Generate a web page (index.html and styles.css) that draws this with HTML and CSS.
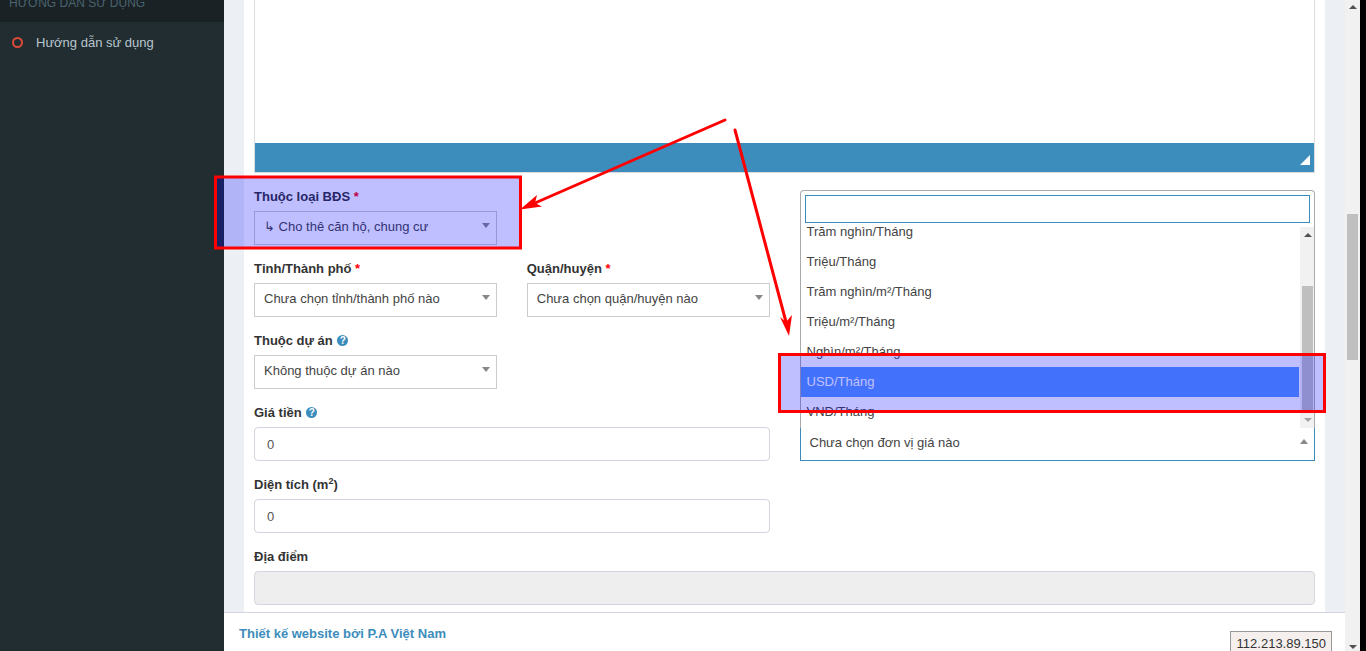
FILE: index.html
```html
<!DOCTYPE html>
<html lang="vi">
<head>
    <meta charset="UTF-8">
    <meta name="viewport" content="width=device-width, initial-scale=1.0">
    <title>Thêm bất động sản</title>
    <link rel="stylesheet" href="styles.css">
</head>
<body>
    <div class="page">
        <aside class="sidebar">
            <div class="sidebar-header"><span>HƯỚNG DẪN SỬ DỤNG</span></div>
            <a class="sidebar-item" href="#"><i class="ring"></i>Hướng dẫn sử dụng</a>
        </aside>

        <div class="main">
            <div class="content">
                <div class="panel">
                    <div class="editor">
                        <div class="editor-body"></div>
                        <div class="editor-bar"><i class="resize"></i></div>
                    </div>

                    <form class="form">
                        <div class="row">
                            <div class="half">
                                <div class="field">
                                    <label>Thuộc loại BĐS <b class="req">*</b></label>
                                    <div class="select">↳ Cho thê căn hộ, chung cư<i class="caret"></i></div>
                                </div>
                            </div>
                        </div>
                        <div class="row">
                            <div class="half">
                                <div class="field">
                                    <label>Tỉnh/Thành phố <b class="req">*</b></label>
                                    <div class="select">Chưa chọn tỉnh/thành phố nào<i class="caret"></i></div>
                                </div>
                                <div class="field">
                                    <label>Quận/huyện <b class="req">*</b></label>
                                    <div class="select">Chưa chọn quận/huyện nào<i class="caret"></i></div>
                                </div>
                            </div>
                        </div>
                        <div class="row">
                            <div class="half">
                                <div class="field">
                                    <label>Thuộc dự án <span class="help">?</span></label>
                                    <div class="select">Không thuộc dự án nào<i class="caret"></i></div>
                                </div>
                            </div>
                        </div>
                        <div class="row">
                            <div class="field">
                                <label>Giá tiền <span class="help">?</span></label>
                                <div class="input">0</div>
                            </div>
                            <div class="select select-open">
                                Chưa chọn đơn vị giá nào<i class="caret caret-up"></i>
                                <!-- danh sách đang mở phía trên ô chọn -->
                                <div class="dropdown">
                                    <div class="search-wrap"><div class="search"></div></div>
                                    <div class="list-wrap">
                                        <ul class="list">
                                            <li>Trăm nghìn/Tháng</li>
                                            <li>Triệu/Tháng</li>
                                            <li>Trăm nghìn/m²/Tháng</li>
                                            <li>Triệu/m²/Tháng</li>
                                            <li>Nghìn/m²/Tháng</li>
                                            <li class="active">USD/Tháng</li>
                                            <li>VND/Tháng</li>
                                        </ul>
                                        <div class="list-scroll">
                                            <i class="arrow arrow-up"></i>
                                            <i class="list-thumb"></i>
                                            <i class="arrow arrow-down"></i>
                                        </div>
                                    </div>
                                </div>
                            </div>
                        </div>
                        <div class="row">
                            <div class="field">
                                <label>Diện tích (m<sup>2</sup>)</label>
                                <div class="input">0</div>
                            </div>
                        </div>
                        <div class="field">
                            <label>Địa điểm</label>
                            <div class="input input-disabled"></div>
                        </div>
                    </form>
                </div>
            </div>
            <footer class="footer">
                <a href="#">Thiết kế website bởi P.A Việt Nam</a>
                <span class="ip">112.213.89.150</span>
            </footer>
        </div>

        <div class="scrollbar">
            <i class="arrow arrow-up"></i>
            <i class="thumb"></i>
            <i class="arrow arrow-down"></i>
        </div>
    </div>

    <!-- khung và mũi tên chú thích vẽ đè lên trang -->
    <svg class="notes" width="1366" height="651" viewBox="0 0 1366 651">
        <rect class="note-box" x="215.5" y="177" width="305" height="71"/>
        <rect class="note-box" x="779.5" y="354.5" width="545" height="57"/>
        <line class="note-line" x1="725" y1="120" x2="535" y2="203"/>
        <polygon class="note-head" points="520,209.5 537,195 535,203 542,206.5"/>
        <line class="note-line" x1="735" y1="130" x2="786" y2="322"/>
        <polygon class="note-head" points="789,336 780,317 786,322 792,315"/>
    </svg>
</body>
</html>
```

FILE: styles.css
```css
* {
    box-sizing: border-box;
}
html, body {
    margin: 0;
    padding: 0;
    height: 651px;
    overflow: hidden;
}
body {
    background-color: #000;
    font-family: "Liberation Sans", Arial, sans-serif;
    font-size: 13px;
    color: #444;
    position: relative;
}
ul, li {
    list-style: none;
    margin: 0;
    padding: 0;
}
a {
    text-decoration: none;
}
.page {
    display: flex;
    width: 1360px;
    height: 651px;
}

/* sidebar */
.sidebar {
    flex: 0 0 224px;
    background-color: #222d32;
}
.sidebar-header {
    height: 22px;
    padding-left: 9px;
    background-color: #1a2226;
    color: #4b646f;
    font-size: 12px;
    line-height: 14px;
    overflow: hidden;
}
.sidebar-header span {
    display: block;
    margin-top: -4px;
}
.sidebar-item {
    display: flex;
    align-items: center;
    height: 40px;
    padding-left: 12px;
    color: #b8c7ce;
}
.ring {
    width: 11px;
    height: 11px;
    margin-right: 13px;
    border: 2px solid #dd4b39;
    border-radius: 50%;
}

/* main */
.main {
    flex: 1;
    display: flex;
    flex-direction: column;
    min-width: 0;
}
.content {
    height: 612px;
    padding: 0 20px;
    background-color: #ecf0f5;
    overflow: hidden;
}
.panel {
    height: 100%;
    padding: 0 10px;
    background-color: #fff;
}
.editor {
    height: 173px;
    display: flex;
    flex-direction: column;
    border: 1px solid #ddd;
    border-top: 0;
}
.editor-body {
    flex: 1;
}
.editor-bar {
    height: 29px;
    position: relative;
    background-color: #3c8dbc;
}
.resize {
    position: absolute;
    right: 4px;
    bottom: 7px;
    border-style: solid;
    border-width: 0 0 10px 10px;
    border-color: transparent transparent #fff transparent;
}

/* form */
.form {
    margin-top: 13px;
}
.row {
    display: grid;
    grid-template-columns: 1fr 1fr;
    gap: 30px;
    margin-bottom: 13px;
}
.half {
    display: grid;
    grid-template-columns: 1fr 1fr;
    gap: 30px;
}
label {
    display: block;
    height: 20px;
    margin-bottom: 5px;
    font-weight: bold;
    line-height: 22px;
    color: #333;
}
label sup {
    font-size: 9px;
    line-height: 0;
}
.req {
    color: #f00;
}
.help {
    display: inline-block;
    width: 11px;
    height: 11px;
    margin-top: 5px;
    margin-left: 1px;
    border-radius: 50%;
    background-color: #3c8dbc;
    color: #fff;
    font-size: 10px;
    line-height: 11px;
    text-align: center;
    vertical-align: top;
}
.select {
    position: relative;
    height: 34px;
    padding-left: 9px;
    border: 1px solid #ccc;
    background-color: #fff;
    line-height: 30px;
    color: #444;
}
.caret {
    position: absolute;
    top: 11px;
    right: 6px;
    border-style: solid;
    border-width: 5px 4px 0;
    border-color: #888 transparent transparent;
}
.caret-up {
    border-width: 0 4px 5px;
    border-color: transparent transparent #888;
}
.input {
    height: 34px;
    padding-left: 12px;
    border: 1px solid #d2d6de;
    border-radius: 4px;
    background-color: #fff;
    line-height: 34px;
    color: #555;
}
.input-disabled {
    background-color: #eee;
}

/* danh sách đơn vị giá */
.select-open {
    align-self: end;
    border-color: #3c8dbc;
}
.dropdown {
    position: absolute;
    left: -1px;
    right: -1px;
    bottom: 100%;
    height: 238px;
    display: flex;
    flex-direction: column;
    border: 1px solid #aaa;
    border-bottom: 0;
    border-radius: 4px 4px 0 0;
    background-color: #fff;
    line-height: 20px;
}
.search-wrap {
    padding: 4px;
}
.search {
    height: 28px;
    border: 1px solid #3c8dbc;
}
.list-wrap {
    flex: 1;
    display: flex;
    overflow: hidden;
}
.list {
    flex: 1;
    margin-top: -10px;
    padding-right: 1px;
}
.list li {
    height: 30px;
    padding: 5px 6px;
}
.list .active {
    background-color: #5897fb;
    color: #fff;
}
.list-scroll {
    flex: 0 0 14px;
    position: relative;
    background-color: #f1f1f1;
}
.list-thumb {
    position: absolute;
    top: 59px;
    left: 2px;
    width: 11px;
    height: 126px;
    background-color: #bfbfbf;
}

/* thanh cuộn trang */
.scrollbar {
    flex: 0 0 15px;
    position: relative;
    background-color: #f1f1f1;
}
.thumb {
    position: absolute;
    top: 214px;
    left: 2px;
    width: 11px;
    height: 146px;
    background-color: #bfbfbf;
}
.arrow {
    position: absolute;
    left: 4px;
    border-style: solid;
}
.arrow-up {
    top: 5px;
    border-width: 0 4px 4px;
    border-color: transparent transparent #505050;
}
.arrow-down {
    bottom: 2px;
    border-width: 4px 4px 0;
    border-color: #505050 transparent transparent;
}
.list-scroll .arrow-up {
    top: 6px;
}
.list-scroll .arrow-down {
    bottom: 6px;
    border-top-color: #a3a3a3;
}

/* footer */
.footer {
    height: 39px;
    display: flex;
    justify-content: space-between;
    padding: 11px 13px 0 15px;
    border-top: 1px solid #d2d6de;
    background-color: #fff;
    line-height: 20px;
}
.footer a {
    font-weight: bold;
    color: #3c8dbc;
}
.ip {
    height: 22px;
    margin-top: 7px;
    padding: 2px 5px 2px 6px;
    border: 1px solid #999;
    background-color: #f5f0ee;
    line-height: 19px;
    color: #333;
}

/* chú thích */
.notes {
    position: absolute;
    left: 0;
    top: 0;
    pointer-events: none;
}
.note-box {
    fill: rgba(0, 0, 255, 0.25);
    stroke: #f00;
    stroke-width: 3;
}
.note-line {
    stroke: #f00;
    stroke-width: 3;
    stroke-linecap: round;
}
.note-head {
    fill: #f00;
}
```
